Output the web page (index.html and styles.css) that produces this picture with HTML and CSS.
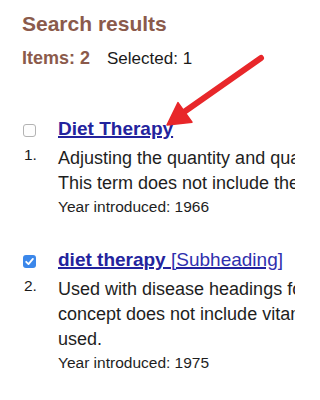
FILE: index.html
```html
<!DOCTYPE html>
<html lang="en">
<head>
<meta charset="utf-8">
<title>Search results</title>
<link rel="stylesheet" href="styles.css">
</head>
<body>
<div class="page">
  <h2 class="title">Search results</h2>
  <div class="counts"><b class="items">Items: 2</b><span class="sel">Selected: 1</span></div>
  <div class="results">
    <div class="item">
      <div class="left">
        <span class="cb"></span>
        <span class="num">1.</span>
      </div>
      <div class="content">
        <a class="link" href="#">Diet Therapy</a>
        <div class="desc">
          <div class="line">Adjusting the quantity and quality of food intake to improve health status of an individual.</div>
          <div class="line">This term does not include the methods of food intake (NUTRITIONAL SUPPORT).</div>
        </div>
        <div class="year">Year introduced: 1966</div>
      </div>
    </div>
    <div class="item">
      <div class="left">
        <span class="cb checked"><svg viewBox="0 0 13 13" width="13" height="13"><path d="M3.2 6.8 L5.5 9.1 L9.9 3.9" fill="none" stroke="#fff" stroke-width="1.8" stroke-linecap="round" stroke-linejoin="round"/></svg></span>
        <span class="num">2.</span>
      </div>
      <div class="content">
        <a class="link" href="#">diet therapy <span class="sub">[Subheading]</span></a>
        <div class="desc">
          <div class="line">Used with disease headings for dietary and nutritional management of the disease. The</div>
          <div class="line">concept does not include vitamin or mineral supplements for which 'drug therapy' is</div>
          <div class="line">used.</div>
        </div>
        <div class="year">Year introduced: 1975</div>
      </div>
    </div>
  </div>
  <svg class="arrow" viewBox="0 0 295 400" width="295" height="400">
    <line x1="261" y1="58" x2="184" y2="112" stroke="#e8272a" stroke-width="6" stroke-linecap="round"/>
    <polygon points="167,125 178,102.6 192,122.2" fill="#e8272a" stroke="#e8272a" stroke-width="1.5" stroke-linejoin="round"/>
  </svg>
</div>
</body>
</html>
```

FILE: styles.css
```css
html, body {
  margin: 0;
  padding: 0;
  background: #ffffff;
  overflow: hidden;
}

body {
  width: 295px;
  height: 400px;
  font-family: "Liberation Sans", Arial, Helvetica, sans-serif;
  color: #1e1e1e;
}

.page {
  position: relative;
  width: 295px;
  height: 400px;
  padding: 12px 0 0 22px;
  box-sizing: border-box;
  overflow: hidden;
}

.title {
  margin: 0;
  font-size: 21px;
  line-height: 24px;
  font-weight: 700;
  color: #8b5a4b;
  white-space: nowrap;
}

.counts {
  margin-top: 12px;
  height: 20px;
  font-size: 18px;
  line-height: 20px;
  white-space: nowrap;
}

.items {
  font-weight: 700;
  color: #8b5a4b;
}

.sel {
  margin-left: 17px;
  font-size: 17px;
  line-height: 20px;
  color: #1a1a1a;
}

.results {
  margin-top: 50px;
  display: flex;
  flex-direction: column;
  gap: 33px;
}

.item {
  display: grid;
  grid-template-columns: 36px 1fr;
}

.left {
  display: flex;
  flex-direction: column;
  align-items: flex-start;
}

.cb {
  display: block;
  width: 13px;
  height: 13px;
  margin-top: 6px;
  margin-left: 1px;
  box-sizing: border-box;
  border: 1px solid #b3b3b3;
  border-radius: 3px;
  background: #fdfdfd;
}

.cb.checked {
  border: none;
  background: #3b87ea;
}

.cb svg {
  display: block;
}

.num {
  display: block;
  margin-top: 8.5px;
  margin-left: 2px;
  font-size: 15.5px;
  line-height: 18px;
  color: #1a1a1a;
}

.content {
  min-width: 0;
  white-space: nowrap;
}

.link {
  display: block;
  font-size: 19px;
  line-height: 22px;
  font-weight: 700;
  color: #23239d;
  text-decoration: underline;
  text-decoration-thickness: 1.5px;
}

.sub {
  font-weight: 400;
  color: #2f2fae;
}

.desc {
  margin-top: 6px;
  font-size: 18px;
  line-height: 25px;
}

.line {
  white-space: nowrap;
}

.year {
  margin-top: 2px;
  font-size: 15.5px;
  line-height: 18px;
}

.arrow {
  position: absolute;
  top: 0;
  left: 0;
  pointer-events: none;
}
```
